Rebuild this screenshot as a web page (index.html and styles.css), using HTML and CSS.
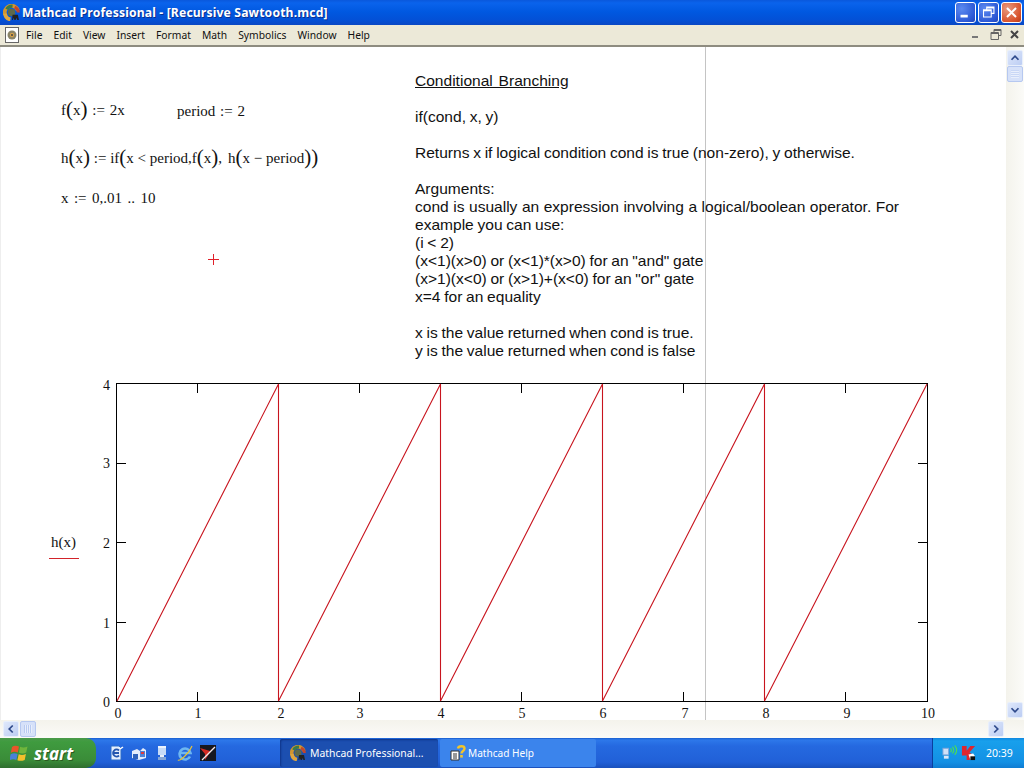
FILE: index.html
```html
<!DOCTYPE html>
<html lang="en">
<head>
<meta charset="utf-8">
<title>Mathcad Professional - [Recursive Sawtooth.mcd]</title>
<link rel="stylesheet" href="styles.css">
</head>
<body>
<svg class="defs" width="0" height="0" aria-hidden="true">
  <defs>
    <symbol id="mc" viewBox="0 0 16 16">
      <circle cx="8" cy="8" r="3.500" fill="#5e6a4a"/>
      <path d="M2 10A6.200 6.200 0 0 1 14 6" fill="none" stroke="#d2952f" stroke-width="3.600"/>
      <path d="M3.500 5A6 6 0 0 1 9 2" fill="none" stroke="#3a7a48" stroke-width="3"/>
      <path d="M11 3A6 6 0 0 1 14.500 8" fill="none" stroke="#c2452c" stroke-width="2.800"/>
      <path d="M2 9A6 6 0 0 0 7 14.500" fill="none" stroke="#e0a63e" stroke-width="3.600"/>
      <path d="M9 10h5l1 5h-1.600l-.6-2-1 2h-1l-1-2-.5 2H8.500z" fill="#222"/>
    </symbol>
    <symbol id="flag" viewBox="0 0 20 20">
      <path d="M2 4c2-1.500 4-1.500 7-.5l-1.200 6c-2.500-1-4.500-1-7 .3z" fill="#e8552a"/>
      <path d="M10 3.800c2.500 1 4.500 1 7.500-.3l-1.300 6c-2.500 1.200-4.500 1.200-7.200.3z" fill="#6fb53c"/>
      <path d="M.6 11.200c2.500-1.200 4.500-1.200 7-.3l-1.200 6c-2.500-1-4.500-1-7 .3z" fill="#4a80d8"/>
      <path d="M8.700 11.200c2.500 1 4.500 1 7.200-.3l-1.200 6c-2.800 1.200-5 1.200-7.300.3z" fill="#f3c02c"/>
    </symbol>
  </defs>
</svg>

<div class="window">
  <header class="titlebar">
    <svg class="title-icon"><use href="#mc"/></svg>
    <span class="title-text">Mathcad Professional - [Recursive Sawtooth.mcd]</span>
    <div class="caption-buttons">
      <button class="cap cap-blue" aria-label="Minimize"><svg viewBox="0 0 21 21"><rect x="5" y="13" width="8" height="3" fill="#fff"/></svg></button>
      <button class="cap cap-blue" aria-label="Restore"><svg viewBox="0 0 21 21"><path d="M8.500 7V4.500h8v7H14M5 7.500h8.500v8H5z M5 8.500h8.500M8.500 5.500h8" fill="none" stroke="#fff" stroke-width="1.200"/></svg></button>
      <button class="cap cap-red" aria-label="Close"><svg viewBox="0 0 21 21"><path d="M5.500 5.500l10 10M15.500 5.500l-10 10" stroke="#fff" stroke-width="2.200"/></svg></button>
    </div>
  </header>

  <nav class="menubar">
    <span class="doc-icon"><svg viewBox="0 0 10 10"><circle cx="5" cy="5" r="4.500" fill="#8a8468"/><circle cx="5" cy="5" r="2.200" fill="#d8a24a"/><circle cx="5" cy="5" r="1" fill="#444"/></svg></span>
    <ul class="menu">
      <li>File</li><li>Edit</li><li>View</li><li>Insert</li><li>Format</li><li>Math</li><li>Symbolics</li><li>Window</li><li>Help</li>
    </ul>
    <div class="mdi-buttons">
      <svg viewBox="0 0 16 16"><rect x="3" y="9" width="6" height="2" fill="#777"/></svg>
      <svg viewBox="0 0 16 16"><path d="M6 5V2.500h7v6h-2.500M3 5.500h7.500v7H3z M3 6.500h7.500M6 3.500h7" fill="none" stroke="#666" stroke-width="1"/></svg>
      <svg viewBox="0 0 16 16"><path d="M4 4l7 7M11 4l-7 7" stroke="#444" stroke-width="2"/></svg>
    </div>
  </nav>

  <div class="workspace">
    <main class="sheet">
      <div class="page-break"></div>

      <div class="math m-f">f<span class="paren">(</span>x<span class="paren">)</span> := 2x</div>
      <div class="math m-period">period := 2</div>
      <div class="math m-h">h<span class="paren">(</span>x<span class="paren">)</span> := if<span class="paren">(</span>x &lt; period,f<span class="paren">(</span>x<span class="paren">)</span><span class="comma">,</span>h<span class="paren">(</span>x − period<span class="paren">)</span><span class="paren">)</span></div>
      <div class="math m-x">x := 0,.01 .. 10</div>
      <svg class="cursor" viewBox="0 0 11 11"><path d="M0 5.500h11M5.500 0v11" stroke="#e0202a" fill="none"/></svg>

      <section class="note">
        <p class="heading">Conditional Branching</p>
        <p>if(cond, x, y)</p>
        <p>Returns x if logical condition cond is true (non-zero), y otherwise.</p>
        <p>Arguments:<br>
        <span class="wide">cond is usually an expression involving a logical/boolean operator. For</span><br>
        example you can use:<br>
        (i &lt; 2)<br>
        (x&lt;1)(x&gt;0) or (x&lt;1)*(x&gt;0) for an "and" gate<br>
        (x&gt;1)(x&lt;0) or (x&gt;1)+(x&lt;0) for an "or" gate<br>
        x=4 for an equality</p>
        <p>x is the value returned when cond is true.<br>
        y is the value returned when cond is false</p>
      </section>

      <svg class="plot" viewBox="0 0 1004 360" width="1004" height="360">
        <rect x="116.500" y="12.500" width="811" height="318" fill="none" stroke="#000"/>
        <path class="ticks" d="M197.500 13v9M278.500 13v9M359.500 13v9M440.500 13v9M521.500 13v9M602.500 13v9M683.500 13v9M764.500 13v9M845.500 13v9
          M197.500 330v-9M278.500 330v-9M359.500 330v-9M440.500 330v-9M521.500 330v-9M602.500 330v-9M683.500 330v-9M764.500 330v-9M845.500 330v-9
          M117 92.500h9M117 171.500h9M117 251.500h9M927 92.500h-9M927 171.500h-9M927 251.500h-9"/>
        <path class="trace" d="M117 330L278.500 13V330L440.500 13V330L602.500 13V330L764.500 13V330L927 13"/>
        <g class="axis-label">
          <text x="110" y="19" text-anchor="end">4</text>
          <text x="110" y="97" text-anchor="end">3</text>
          <text x="110" y="177" text-anchor="end">2</text>
          <text x="110" y="257" text-anchor="end">1</text>
          <text x="110" y="336" text-anchor="end">0</text>
          <text x="118" y="347" text-anchor="middle">0</text>
          <text x="198" y="347" text-anchor="middle">1</text>
          <text x="281" y="347" text-anchor="middle">2</text>
          <text x="360" y="347" text-anchor="middle">3</text>
          <text x="441" y="347" text-anchor="middle">4</text>
          <text x="522" y="347" text-anchor="middle">5</text>
          <text x="603" y="347" text-anchor="middle">6</text>
          <text x="685" y="347" text-anchor="middle">7</text>
          <text x="766" y="347" text-anchor="middle">8</text>
          <text x="847" y="347" text-anchor="middle">9</text>
          <text x="928" y="347" text-anchor="middle">10</text>
          <text class="legend" x="51" y="176">h(x)</text>
        </g>
        <path d="M49 187.500h30" stroke="#d2232a" fill="none"/>
      </svg>
    </main>
    <aside class="vscroll">
      <button class="sb-btn" aria-label="Up"><svg viewBox="0 0 16 16"><path d="M4 10l4-4 4 4" fill="none" stroke="#2f4a8c" stroke-width="2"/></svg></button>
      <div class="sb-thumb sb-thumb-v"></div>
      <div class="sb-fill"></div>
      <button class="sb-btn" aria-label="Down"><svg viewBox="0 0 16 16"><path d="M4 6l4 4 4-4" fill="none" stroke="#2f4a8c" stroke-width="2"/></svg></button>
    </aside>
  </div>

  <div class="hscroll">
    <button class="sb-btn" aria-label="Left"><svg viewBox="0 0 16 16"><path d="M10 4L6 8l4 4" fill="none" stroke="#2f4a8c" stroke-width="2"/></svg></button>
    <div class="sb-thumb sb-thumb-h"></div>
    <div class="sb-fill"></div>
    <button class="sb-btn" aria-label="Right"><svg viewBox="0 0 16 16"><path d="M6 4l4 4-4 4" fill="none" stroke="#2f4a8c" stroke-width="2"/></svg></button>
  </div>

  <footer class="taskbar">
    <button class="start"><svg class="flag"><use href="#flag"/></svg><span>start</span></button>
    <div class="quick">
      <svg viewBox="0 0 16 16"><path d="M3 1h8l2 2v12H3z" fill="#e6f0fd" stroke="#2c6cc8"/><path d="M11 5.500A3.500 3.500 0 1 0 11 10.500M5 8h6" fill="none" stroke="#2456ae" stroke-width="1.800"/><path d="M12 4l3-2" stroke="#fff" stroke-width="1.500"/></svg>
      <svg viewBox="0 0 16 16"><path d="M1 6l5-2 3 2 3-3 3 2v8l-7 2-7-2z" fill="#e3ecfb"/><path d="M9 6h5v6H9z" fill="#4d82d8"/><path d="M2 9h5v5H2z" fill="#2f62ba"/><path d="M10 8h3" stroke="#e03a3a" stroke-width="2"/></svg>
      <svg viewBox="0 0 16 16"><path d="M4 1h8v9H4z" fill="#c7dbf7"/><path d="M4 1h8v2H4z" fill="#eaf2fd"/><path d="M6 10h4v2H6z" fill="#e9eff9"/><path d="M4 12h8v3H4z" fill="#86a6d6"/></svg>
      <svg viewBox="0 0 16 16"><path d="M13 11.500A5.500 5.500 0 1 1 13.500 8H3.500" fill="none" stroke="#6db6f2" stroke-width="2.600"/><path d="M1 15C2.500 16.500 12 9 15 1" fill="none" stroke="#e2c23a" stroke-width="1.200"/></svg>
      <svg viewBox="0 0 16 16"><rect width="16" height="16" fill="#16181f"/><path d="M0 3l10 3 5-5-6 8-4 6V9z" fill="#d42b22"/><path d="M2 15L15 2" stroke="#eee" stroke-width="1.300"/></svg>
    </div>
    <div class="task task-active"><svg class="task-icon"><use href="#mc"/></svg><span>Mathcad Professional...</span></div>
    <div class="task"><svg class="task-icon" viewBox="0 0 16 16"><path d="M1 6h8v9H1z" fill="#fff" stroke="#333"/><path d="M3 9h4M3 11h4M3 13h4" stroke="#333"/><path d="M8 3.500C8.500.500 14.500.500 14.500 3.500c0 2.500-3 2.500-3 5" fill="none" stroke="#f2c52b" stroke-width="2.400"/><rect x="10.200" y="10" width="2.600" height="2.600" fill="#f2c52b"/></svg><span>Mathcad Help</span></div>
    <div class="tray">
      <svg class="tray-net" viewBox="0 0 18 16"><rect x="1" y="3" width="6" height="7" fill="#cfe0f7" stroke="#7fa5d8"/><rect x="2" y="11" width="5" height="3" fill="#dbe7f8"/><path d="M9 3q2 2 0 4M11 1.500q3 3.500 0 7M13.500 0q4 5 0 10" fill="none" stroke="#4ddc54" stroke-width="1.200"/></svg>
      <svg class="tray-kav" viewBox="0 0 16 16"><path d="M1 0h5v5l4-5h5L9 7l3 2-3 6H6v-5H1z" fill="#e0252e"/><path d="M8 9l5-1 2 3-5 4z" fill="#fff"/><rect x="10" y="11" width="5" height="4" fill="#111"/></svg>
      <time>20:39</time>
    </div>
  </footer>
</div>
</body>
</html>
```

FILE: styles.css
```css
* { box-sizing: border-box; }
html, body { margin: 0; padding: 0; height: 100%; overflow: hidden; }
body { font-family: "Noto Sans", "Liberation Sans", sans-serif; background: #fff; }
.defs { position: absolute; }
button { border: 0; padding: 0; margin: 0; font: inherit; }

.window { width: 1024px; height: 768px; display: flex; flex-direction: column; }

/* title bar */
.titlebar {
  height: 25px; flex: none; display: flex; align-items: center; padding: 0 2px 0 3px;
  background: linear-gradient(180deg, #0a58dc 0, #0a63ec 3px, #0058e0 12px, #0350d6 20px, #0a48c4 25px);
}
.title-icon { width: 17px; height: 17px; flex: none; margin-right: 2px; }
.title-text {
  color: #fff; font: bold 12.200px "Noto Sans", sans-serif; letter-spacing: .14px;
  text-shadow: 1px 1px #0a2f8f; white-space: nowrap;
}
.caption-buttons { margin-left: auto; display: flex; gap: 2px; }
.cap { width: 21px; height: 21px; border-radius: 3px; border: 1px solid #fff; display: block; }
.cap svg { display: block; width: 19px; height: 19px; }
.cap-blue { background: radial-gradient(circle at 30% 30%, #5c8af0, #2a56d4 75%, #2146b8); }
.cap-red { background: radial-gradient(circle at 30% 30%, #e89a80, #d8532c 70%, #b83a18); }

/* menu bar */
.menubar {
  height: 22px; flex: none; display: flex; align-items: center; background: #ece9d8;
  border-bottom: 2px solid #8e8c80; padding-left: 5px;
}
.doc-icon { width: 14px; height: 16px; background: #fff; border: 1px solid #666; display: flex; align-items: center; justify-content: center; flex: none; }
.doc-icon svg { width: 10px; height: 10px; }
.menu { list-style: none; margin: 0 0 0 7px; padding: 0; display: flex; gap: 11px; font-size: 10.300px; color: #111; }
.mdi-buttons { margin-left: auto; display: flex; gap: 3px; padding-right: 1px; }
.mdi-buttons svg { width: 16px; height: 16px; display: block; }

/* document */
.workspace { flex: 1; display: flex; min-height: 0; }
.sheet { flex: 1; position: relative; background: #fff; border-left: 1px solid #eee; overflow: hidden; }
.page-break { position: absolute; left: 704px; top: 0; bottom: 0; width: 1px; background: #c4c4c4; }
.math { position: absolute; font: 15px "Liberation Serif", serif; color: #111; white-space: nowrap; line-height: 20px; word-spacing: 1px; }
.paren { font-size: 21px; font-weight: normal; line-height: 16px; vertical-align: -1px; }
.comma { margin-right: 6px; }
.m-f { left: 60px; top: 53px; }
.m-period { left: 176px; top: 54px; }
.m-h { left: 60px; top: 101px; word-spacing: 0; }
.m-x { left: 60px; top: 141px; word-spacing: 1.700px; }
.cursor { position: absolute; left: 207px; top: 207px; width: 11px; height: 11px; display: block; }

.note { position: absolute; left: 414px; top: 25px; font: 15.550px/18px "Liberation Sans", sans-serif; word-spacing: -.6px; color: #111; white-space: nowrap; }
.note p { margin: 0 0 18px; }
.note .heading { text-decoration: underline; word-spacing: 1.500px; }
.wide { word-spacing: .2px; }

.plot { position: absolute; left: -1px; top: 324px; display: block; }
.ticks { fill: none; stroke: #000; }
.trace { fill: none; stroke: #c8141e; stroke-width: 1.100; }
.axis-label { font: 14px "Liberation Serif", serif; fill: #111; }
.legend { font-size: 15px; }

/* scrollbars */
.vscroll { width: 18px; flex: none; display: flex; flex-direction: column; align-items: center; padding: 3px 1px 2px 0; background: linear-gradient(90deg, #f4f3ec, #fbfbf8); }
.hscroll { height: 18px; flex: none; display: flex; align-items: center; padding: 0 20px 0 3px; background: linear-gradient(180deg, #f4f3ec, #fbfbf8); }
.sb-btn { width: 16px; height: 16px; flex: none; background: linear-gradient(135deg, #dfe8fb, #bccdf3); border: 1px solid #e8effc; border-radius: 2px; display: block; }
.sb-btn svg { display: block; width: 14px; height: 14px; }
.sb-thumb { flex: none; border: 1px solid #b6c8f0; border-radius: 2px; }
.sb-thumb-v { width: 16px; height: 16px; background: repeating-linear-gradient(180deg, #c9d7f6 0 1px, #e9effc 1px 2px) center / 8px 8px no-repeat, #d6e1f9; }
.sb-thumb-h { width: 16px; height: 16px; margin-left: 1px; background: repeating-linear-gradient(90deg, #b9cbf1 0 1px, #e9effc 1px 2px) center / 8px 8px no-repeat, #d6e1f9; }
.sb-fill { flex: 1; }
.vscroll .sb-fill { width: 100%; }

/* taskbar */
.taskbar {
  height: 30px; flex: none; display: flex; align-items: stretch;
  background: linear-gradient(180deg, #1a5fd0 0, #2d78ea 2px, #2569e0 8px, #2160d8 24px, #1a50bc 30px);
}
.start {
  width: 96px; flex: none; display: flex; align-items: center; gap: 4px; padding-left: 10px;
  border-radius: 0 10px 10px 0; color: #fff; font: italic bold 17px "Noto Sans", sans-serif;
  text-shadow: 1px 1px #2a5a20;
  background: linear-gradient(180deg, #4a9a4a 0, #3f9b3f 4px, #3a8c38 22px, #2f6e2f 30px);
}
.flag { width: 20px; height: 20px; }
.quick { width: 184px; flex: none; display: flex; align-items: center; gap: 7px; padding-left: 12px; }
.quick svg { width: 16px; height: 16px; flex: none; display: block; }
.task {
  width: 158px; margin-right: 2px; flex: none; display: flex; align-items: center; gap: 4px; padding-left: 10px;
  color: #fff; font-size: 10.400px; background: #3b84ec; height: 28px; align-self: center; border-radius: 2px; white-space: nowrap;
}
.task-active { background: #1c4fb0; width: 158px; box-shadow: inset 1px 1px 2px #0e3488; }
.task + .task { width: 156px; gap: 2px; font-size: 10.100px; }
.task-icon { width: 16px; height: 16px; flex: none; }
.tray {
  margin-left: auto; width: 92px; flex: none; display: flex; align-items: center; padding-left: 9px; gap: 2px;
  background: linear-gradient(180deg, #1088e0 0, #18a0ec 3px, #1390e4 24px, #0f7cd2 30px);
  border-left: 1px solid #0a3f9e; color: #fff; font-size: 10.500px;
}
.tray-net { width: 17px; height: 16px; flex: none; }
.tray-kav { width: 15px; height: 15px; flex: none; }
.tray time { margin-left: 8px; }
```
